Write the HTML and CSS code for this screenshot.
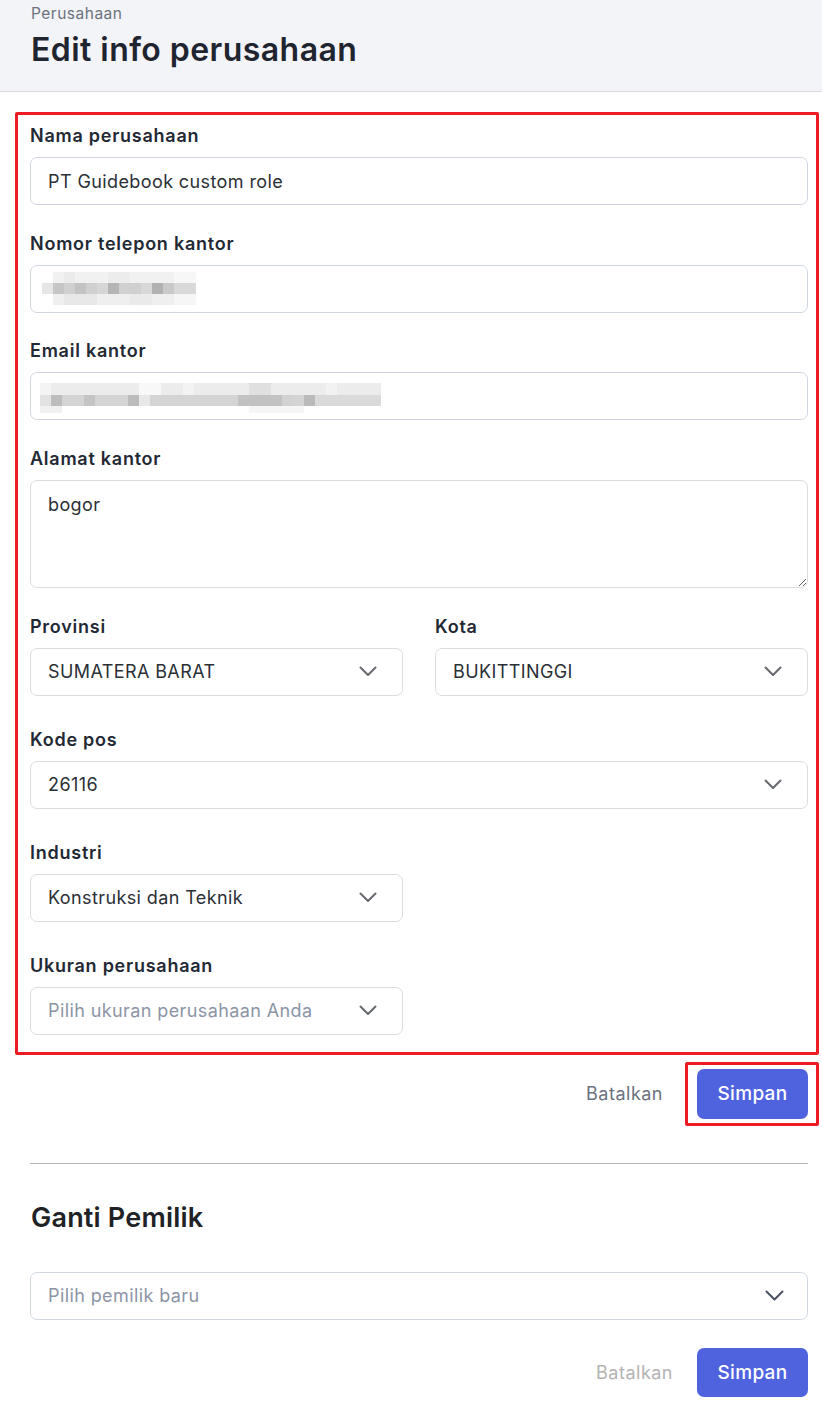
FILE: index.html
```html
<!DOCTYPE html>
<html lang="id">
<head>
  <meta charset="UTF-8" />
  <meta name="viewport" content="width=device-width, initial-scale=1.0" />
  <title>Edit info perusahaan</title>
  <link rel="stylesheet" href="styles.css">
</head>
<body>
  <header class="page-header">
    <div class="crumb">Perusahaan</div>
    <h1 class="page-title">Edit info perusahaan</h1>
  </header>

  <main class="content">
    <form class="company-form">
      <div class="highlight form-fields">
        <div class="field">
          <label class="label">Nama perusahaan</label>
          <input class="input input-blue" type="text" value="PT Guidebook custom role">
        </div>

        <div class="field">
          <label class="label">Nomor telepon kantor</label>
          <div class="input input-blue masked masked-phone">
            <svg width="154" height="33" viewBox="0 0 154 33">
              <rect x="11" y="0" width="143" height="11" fill="#f1f1f1"/>
              <rect x="22" y="0" width="11" height="11" fill="#ebebeb"/>
              <rect x="66" y="0" width="22" height="11" fill="#ececec"/>
              <rect x="132" y="0" width="22" height="11" fill="#f7f7f7"/>
              <rect x="0" y="11" width="154" height="11" fill="#d0d0d0"/>
              <rect x="0" y="11" width="11" height="11" fill="#e6e6e6"/>
              <rect x="11" y="11" width="11" height="11" fill="#c6c6c6"/>
              <rect x="33" y="11" width="11" height="11" fill="#c3c3c3"/>
              <rect x="55" y="11" width="11" height="11" fill="#d6d6d6"/>
              <rect x="66" y="11" width="11" height="11" fill="#b5b5b5"/>
              <rect x="99" y="11" width="11" height="11" fill="#d8d8d8"/>
              <rect x="110" y="11" width="11" height="11" fill="#b1b1b1"/>
              <rect x="121" y="11" width="11" height="11" fill="#c9c9c9"/>
              <rect x="132" y="11" width="22" height="11" fill="#d9d9d9"/>
              <rect x="11" y="22" width="143" height="11" fill="#efefef"/>
              <rect x="22" y="22" width="33" height="11" fill="#e8e8e8"/>
              <rect x="88" y="22" width="22" height="11" fill="#eaeaea"/>
              <rect x="132" y="22" width="22" height="11" fill="#f6f6f6"/>
            </svg>
          </div>
        </div>

        <div class="field">
          <label class="label">Email kantor</label>
          <div class="input input-blue masked masked-email">
            <svg width="341" height="30" viewBox="0 0 341 30">
              <rect x="0" y="0" width="341" height="12" fill="#ececec"/>
              <rect x="0" y="0" width="11" height="12" fill="#f4f4f4"/>
              <rect x="99" y="0" width="22" height="12" fill="#f8f8f8"/>
              <rect x="143" y="0" width="11" height="12" fill="#f3f3f3"/>
              <rect x="209" y="0" width="22" height="12" fill="#e0e0e0"/>
              <rect x="286" y="0" width="11" height="12" fill="#f2f2f2"/>
              <rect x="0" y="12" width="341" height="11" fill="#d4d4d4"/>
              <rect x="0" y="12" width="11" height="11" fill="#e2e2e2"/>
              <rect x="11" y="12" width="11" height="11" fill="#bdbdbd"/>
              <rect x="44" y="12" width="11" height="11" fill="#c4c4c4"/>
              <rect x="88" y="12" width="11" height="11" fill="#bcbcbc"/>
              <rect x="99" y="12" width="11" height="11" fill="#e8e8e8"/>
              <rect x="198" y="12" width="44" height="11" fill="#c2c2c2"/>
              <rect x="242" y="12" width="11" height="11" fill="#d2d2d2"/>
              <rect x="264" y="12" width="11" height="11" fill="#bababa"/>
              <rect x="275" y="12" width="66" height="11" fill="#dadada"/>
              <rect x="0" y="23" width="341" height="7" fill="#ffffff"/>
              <rect x="0" y="23" width="22" height="7" fill="#f1f1f1"/>
              <rect x="209" y="23" width="55" height="7" fill="#f6f6f6"/>
            </svg>
          </div>
        </div>

        <div class="field field-last-text">
          <label class="label">Alamat kantor</label>
          <textarea class="input textarea">bogor</textarea>
        </div>

        <div class="row-2">
          <div class="field field-select">
            <label class="label">Provinsi</label>
            <div class="input select">
              <span>SUMATERA BARAT</span>
              <svg class="chevron" width="18" height="11" viewBox="0 0 18 11"><path d="M1.5 1.5 L9 9 L16.5 1.5" /></svg>
            </div>
          </div>
          <div class="field field-select">
            <label class="label">Kota</label>
            <div class="input select">
              <span>BUKITTINGGI</span>
              <svg class="chevron" width="18" height="11" viewBox="0 0 18 11"><path d="M1.5 1.5 L9 9 L16.5 1.5" /></svg>
            </div>
          </div>
        </div>

        <div class="field field-select">
          <label class="label">Kode pos</label>
          <div class="input select">
            <span>26116</span>
            <svg class="chevron" width="18" height="11" viewBox="0 0 18 11"><path d="M1.5 1.5 L9 9 L16.5 1.5" /></svg>
          </div>
        </div>

        <div class="field field-select half">
          <label class="label">Industri</label>
          <div class="input select">
            <span>Konstruksi dan Teknik</span>
            <svg class="chevron" width="18" height="11" viewBox="0 0 18 11"><path d="M1.5 1.5 L9 9 L16.5 1.5" /></svg>
          </div>
        </div>

        <div class="field half last">
          <label class="label">Ukuran perusahaan</label>
          <div class="input select">
            <span class="placeholder">Pilih ukuran perusahaan Anda</span>
            <svg class="chevron" width="18" height="11" viewBox="0 0 18 11"><path d="M1.5 1.5 L9 9 L16.5 1.5" /></svg>
          </div>
        </div>
      </div>

      <div class="actions actions-main">
        <button type="button" class="btn-link">Batalkan</button>
        <span class="highlight highlight-btn">
          <button type="submit" class="btn-primary">Simpan</button>
        </span>
      </div>
    </form>

    <hr class="divider">

    <section class="owner">
      <h2 class="section-title">Ganti Pemilik</h2>
      <div class="input input-blue select">
        <span class="placeholder">Pilih pemilik baru</span>
        <svg class="chevron chevron-dark" width="19" height="12" viewBox="0 0 19 12"><path d="M1.5 1.5 L9.5 9.5 L17.5 1.5" /></svg>
      </div>
      <div class="actions actions-owner">
        <button type="button" class="btn-link disabled">Batalkan</button>
        <button type="button" class="btn-primary">Simpan</button>
      </div>
    </section>
  </main>
</body>
</html>
```

FILE: styles.css
```css
body {
  margin: 0;
  font-family: 'Inter', 'Noto Sans', sans-serif;
  background-color: #ffffff;
  color: #222833;
  letter-spacing: 0.4px;
}

.page-header {
  box-sizing: border-box;
  height: 92px;
  padding: 4px 14px 0 31px;
  background-color: #f3f4f7;
  border-bottom: 1px solid #d8dadf;
}

.crumb {
  font-size: 15.5px;
  line-height: 20px;
  color: #6b7280;
  letter-spacing: 0.5px;
}

.page-title {
  margin: 6px 0 0;
  font-size: 32px;
  line-height: 40px;
  font-weight: 600;
  color: #1f2530;
  letter-spacing: 0.45px;
}

.content {
  padding: 20px 14px 0 30px;
}

/* red annotation frames */
.highlight {
  border: 3px solid #ed1c24;
  border-radius: 2px;
}

.form-fields {
  margin: 0 -11px 0 -15px;
  padding: 10px 8px 17px 12px;
}

.field {
  display: flex;
  flex-direction: column;
  margin-bottom: 27.5px;
}

.field-last-text {
  margin-bottom: 28px;
}

.field-select {
  margin-bottom: 33px;
}

.field.last {
  margin-bottom: 0;
}

.half {
  width: calc(50% - 16px);
}

.row-2 {
  display: grid;
  grid-template-columns: 1fr 1fr;
  gap: 32px;
}

.label {
  font-size: 18px;
  line-height: 22px;
  font-weight: 600;
  color: #232934;
  margin-bottom: 10px;
  letter-spacing: 0.75px;
}

.input {
  box-sizing: border-box;
  width: 100%;
  height: 48px;
  margin: 0;
  padding: 0 17px;
  border: 1px solid #dcdcdc;
  border-radius: 7px;
  background-color: #fff;
  font-family: inherit;
  font-size: 18px;
  letter-spacing: 0.4px;
  color: #2b2f36;
  outline: none;
}

.input-blue {
  border-color: #d0d6e0;
}

.masked {
  display: flex;
}

.masked-phone {
  padding: 6px 0 0 11px;
}

.masked-email {
  padding: 10px 0 0 9px;
}

.textarea {
  height: 108px;
  padding: 12px 17px;
  line-height: 24px;
  resize: vertical;
}

.select {
  display: flex;
  align-items: center;
  justify-content: space-between;
  padding-right: 25px;
}

.placeholder {
  color: #8c95a6;
}

.chevron {
  fill: none;
  stroke: #666a70;
  stroke-width: 2;
  stroke-linecap: round;
  stroke-linejoin: round;
}

.chevron-dark {
  stroke: #4b5261;
  margin-right: -2px;
}

.actions {
  display: flex;
  justify-content: flex-end;
  align-items: center;
}

.actions-main {
  margin: 7px -11px 0 0;
  gap: 22px;
}

.highlight-btn {
  display: flex;
  padding: 4px 8px 4px 9px;
}

.btn-link {
  border: none;
  background: none;
  padding: 0;
  font-family: inherit;
  font-size: 18px;
  letter-spacing: 0.5px;
  color: #6b7280;
  cursor: pointer;
}

.btn-link.disabled {
  color: #b3b3b3;
}

.btn-primary {
  width: 111px;
  height: 50px;
  border: none;
  border-radius: 7px;
  background-color: #5063df;
  color: #fff;
  font-family: inherit;
  font-size: 19px;
  font-weight: 500;
  letter-spacing: 0.3px;
  cursor: pointer;
}

.divider {
  margin: 37px 0 0;
  border: none;
  border-top: 1px solid #b4b4b4;
}

.section-title {
  margin: 37px 0 37px 1px;
  font-size: 27px;
  line-height: 34px;
  font-weight: 600;
  color: #202225;
  letter-spacing: 0.2px;
}

.actions-owner {
  margin-top: 28px;
  gap: 24px;
}

.actions-owner .btn-primary {
  height: 49px;
}
```
